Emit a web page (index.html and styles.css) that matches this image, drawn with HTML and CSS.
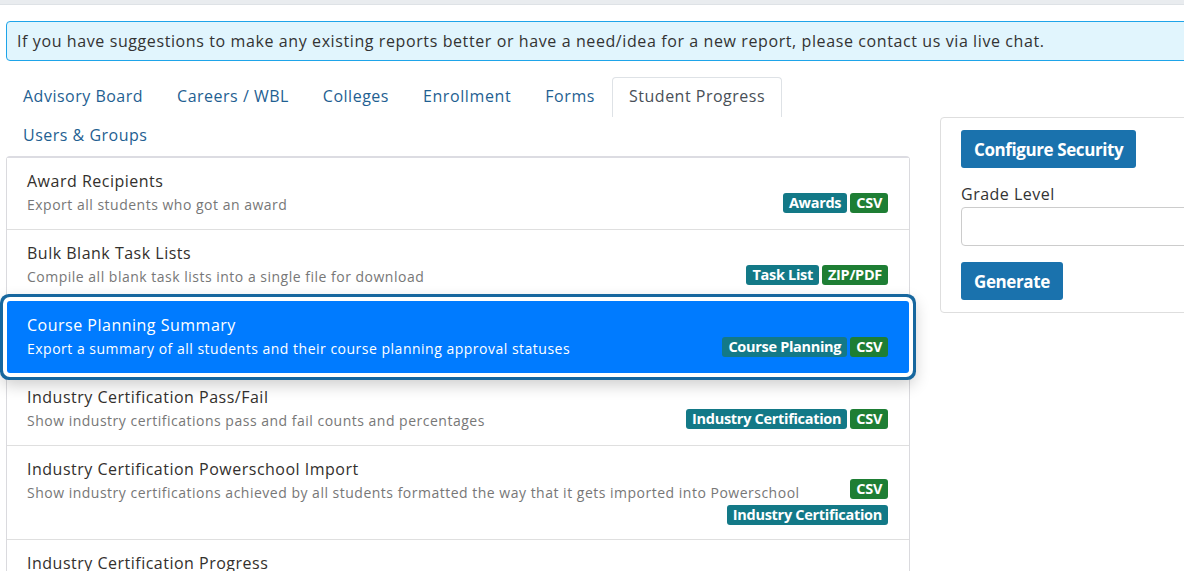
FILE: index.html
```html
<!DOCTYPE html>
<html lang="en">
<head>
    <meta charset="UTF-8">
    <meta name="viewport" content="width=device-width, initial-scale=1.0">
    <title>Reports</title>
    <link rel="stylesheet" href="styles.css">
</head>
<body>
    <div class="topbar"></div>
    <div class="page">
        <div class="alert">If you have suggestions to make any existing reports better or have a need/idea for a new report, please contact us via live chat.</div>
        <div class="content">
            <div class="main-col">
                <nav class="tabs">
                    <a href="#">Advisory Board</a>
                    <a href="#">Careers / WBL</a>
                    <a href="#">Colleges</a>
                    <a href="#">Enrollment</a>
                    <a href="#">Forms</a>
                    <a href="#" class="active">Student Progress</a>
                    <a href="#">Users &amp; Groups</a>
                </nav>
                <div class="report-list">
                    <div class="report">
                        <div class="report-title">Award Recipients</div>
                        <div class="report-row">
                            <div class="report-desc">Export all students who got an award</div>
                            <div class="badges">
                                <span class="badge cat">Awards</span>
                                <span class="badge fmt">CSV</span>
                            </div>
                        </div>
                    </div>
                    <div class="report">
                        <div class="report-title">Bulk Blank Task Lists</div>
                        <div class="report-row">
                            <div class="report-desc">Compile all blank task lists into a single file for download</div>
                            <div class="badges">
                                <span class="badge cat">Task List</span>
                                <span class="badge fmt">ZIP/PDF</span>
                            </div>
                        </div>
                    </div>
                    <div class="report selected">
                        <div class="report-title">Course Planning Summary</div>
                        <div class="report-row">
                            <div class="report-desc">Export a summary of all students and their course planning approval statuses</div>
                            <div class="badges">
                                <span class="badge cat">Course Planning</span>
                                <span class="badge fmt">CSV</span>
                            </div>
                        </div>
                    </div>
                    <div class="report">
                        <div class="report-title">Industry Certification Pass/Fail</div>
                        <div class="report-row">
                            <div class="report-desc">Show industry certifications pass and fail counts and percentages</div>
                            <div class="badges">
                                <span class="badge cat">Industry Certification</span>
                                <span class="badge fmt">CSV</span>
                            </div>
                        </div>
                    </div>
                    <div class="report">
                        <div class="report-title">Industry Certification Powerschool Import</div>
                        <div class="report-row">
                            <div class="report-desc">Show industry certifications achieved by all students formatted the way that it gets imported into Powerschool</div>
                            <div class="badges raised">
                                <span class="badge fmt">CSV</span>
                            </div>
                        </div>
                        <div class="badges extra">
                            <span class="badge cat">Industry Certification</span>
                        </div>
                    </div>
                    <div class="report">
                        <div class="report-title">Industry Certification Progress</div>
                    </div>
                </div>
            </div>
            <aside class="side-col">
                <div class="panel">
                    <button class="btn">Configure Security</button>
                    <label class="field-label" for="grade">Grade Level</label>
                    <input type="text" id="grade" class="field">
                    <button class="btn">Generate</button>
                </div>
            </aside>
        </div>
    </div>
</body>
</html>
```

FILE: styles.css
```css
body {
    font-family: 'Open Sans', 'Liberation Sans', sans-serif;
    margin: 0;
    padding: 0;
    background-color: #fff;
    color: #333;
    overflow: hidden;
}
.topbar {
    height: 4px;
    background-color: #e9ecef;
    border-bottom: 1px solid #dee2e6;
}
.page {
    width: 1240px;
    padding: 16px 0 0 6px;
}
.alert {
    height: 38px;
    line-height: 38px;
    padding: 0 10px;
    font-size: 16px;
    letter-spacing: 0.6px;
    color: #333;
    background-color: #e1f5fd;
    border: 1px solid #1ea4e9;
    border-radius: 4px;
}
.content {
    display: flex;
    gap: 30px;
    margin-top: 16px;
}
.main-col {
    width: 904px;
    flex-shrink: 0;
}
.tabs {
    display: flex;
    flex-wrap: wrap;
    padding-bottom: 1px;
}
.tabs a {
    display: block;
    height: 40px;
    line-height: 37px;
    margin-bottom: -1px;
    padding: 0 16px;
    font-size: 16px;
    letter-spacing: 0.5px;
    color: #1f5f92;
    text-decoration: none;
    border: 1px solid transparent;
    border-bottom: none;
    border-radius: 4px 4px 0 0;
    box-sizing: border-box;
}
.tabs a:nth-child(4),
.tabs a:nth-child(5) {
    letter-spacing: 0.6px;
}
.tabs a.active {
    color: #495057;
    border-color: #dee2e6;
}
.report-list {
    border: 1px solid #dadade;
    border-top: 2px solid #dcdce2;
    border-radius: 4px;
}
.report {
    padding: 11px 21px 13px 20px;
    border-top: 1px solid #dfdfdf;
    background-color: #fff;
}
.report:first-child {
    border-top: none;
}
.report-title {
    font-size: 16px;
    line-height: 24px;
    letter-spacing: 0.5px;
    color: #33302d;
}
.report-row {
    display: flex;
    justify-content: space-between;
    align-items: flex-start;
    gap: 30px;
}
.report-desc {
    font-size: 14px;
    line-height: 23px;
    letter-spacing: 0.5px;
    color: #777;
}
.badges {
    display: flex;
    gap: 3px;
    flex-shrink: 0;
}
.badges.raised {
    margin-top: -2px;
}
.badges.extra {
    justify-content: flex-end;
    margin-top: 1px;
    margin-bottom: 1px;
}
.badge {
    display: inline-block;
    height: 20px;
    line-height: 20px;
    padding: 0 6px;
    font-size: 14.5px;
    font-weight: 700;
    letter-spacing: -0.3px;
    color: #fff;
    border-radius: 3px;
}
.badge.cat {
    background-color: #137987;
}
.badge.fmt {
    background-color: #1e7e34;
}
.report.selected {
    position: relative;
    z-index: 1;
    border-top-color: transparent;
    background-color: #007bff;
    border-radius: 3px;
    box-shadow: 0 0 0 4px #fff, 0 0 0 7px #17679e, 0 6px 16px 6px rgba(0, 0, 0, 0.2);
}
.report.selected + .report {
    border-top-color: transparent;
}
.report.selected .report-title,
.report.selected .report-desc {
    color: #fff;
}
.side-col {
    margin-top: 40px;
}
.panel {
    width: 260px;
    padding: 12px 20px;
    border: 1px solid #dedede;
    border-radius: 4px;
}
.btn {
    display: block;
    height: 38px;
    padding: 0 13px;
    font-family: inherit;
    font-size: 17px;
    font-weight: 700;
    letter-spacing: -0.4px;
    color: #fff;
    background-color: #1a72ad;
    border: none;
    border-radius: 3px;
    cursor: pointer;
}
.field-label {
    display: block;
    margin-top: 14px;
    font-size: 16px;
    line-height: 24px;
    letter-spacing: 0.5px;
    color: #333;
}
.field {
    display: block;
    width: 100%;
    height: 39px;
    margin: 1px 0 16px;
    border: 1px solid #ccc;
    border-radius: 4px;
    box-sizing: border-box;
}
```
